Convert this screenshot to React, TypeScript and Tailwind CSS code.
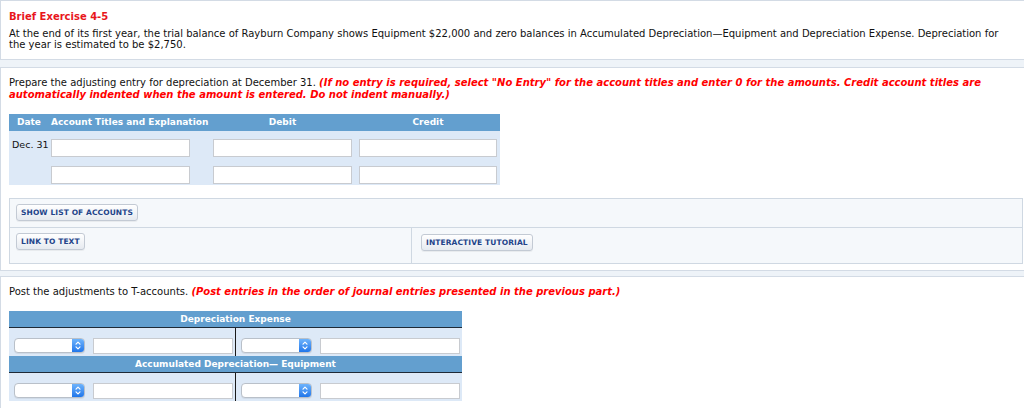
import React from "react";

function Field({ w }: { w: string }) {
  return <div className={`${w} h-[18px] bg-white border border-[#c8cbd0] shrink-0`} />;
}

function Btn({ children }: { children: React.ReactNode }) {
  return (
    <div className="inline-flex items-center h-[17px] px-[4px] rounded-[3px] border border-[#c3cad4] bg-gradient-to-b from-[#ffffff] to-[#e6eaf0] text-[7.5px] font-bold text-[#23448a] leading-none tracking-[0.1px] shadow-[0_1px_0_rgba(0,0,0,0.05)]">
      {children}
    </div>
  );
}

function Sel() {
  return (
    <div className="flex w-[71px] h-[15px] mt-[10px] shrink-0 rounded-[4px] border border-[#b9c0c9] bg-white overflow-hidden shadow-[0_1px_0_rgba(0,0,0,0.06)]">
      <div className="flex-1" />
      <div className="w-[12px] h-full flex items-center justify-center bg-gradient-to-b from-[#6db3fc] to-[#1f76ea]">
        <svg width="6" height="9" viewBox="0 0 6 9" fill="none" stroke="white" strokeWidth="1.2" strokeLinecap="round" strokeLinejoin="round">
          <path d="M1 3.2 L3 1.2 L5 3.2" />
          <path d="M1 5.8 L3 7.8 L5 5.8" />
        </svg>
      </div>
    </div>
  );
}

function TBody() {
  return (
    <div className="flex h-[28px] bg-[#dde9f7]">
      <div className="flex w-[227px] border-r border-[#1a1a1a] pl-[5px] items-start">
        <Sel />
        <div className="w-[140px] h-[16px] mt-[10px] ml-[8px] bg-white border border-[#c8cbd0]" />
      </div>
      <div className="flex w-[226px] pl-[5px] items-start">
        <Sel />
        <div className="w-[140px] h-[16px] mt-[10px] ml-[8px] bg-white border border-[#c8cbd0]" />
      </div>
    </div>
  );
}

function THead({ children }: { children: React.ReactNode }) {
  return (
    <div className="h-[17px] flex items-center justify-center bg-[#639fcf] border-b border-[#1f2a36] text-white font-bold text-[9px] leading-none">
      {children}
    </div>
  );
}

export default function App() {
  return (
    <div className="w-[1024px] h-[408px] overflow-hidden bg-[#eef3f8] text-[#111] font-['DejaVu_Sans',Verdana,sans-serif] text-[10px]">
      {/* Panel 1 */}
      <div className="w-[1040px] h-[60px] bg-white border border-[#d3dbe5] px-[8px] pt-[10px]">
        <div className="font-bold text-[#e8161b] leading-[11px]">Brief Exercise 4-5</div>
        <p className="mt-[6px] leading-[11px] w-[1008px]">
          At the end of its first year, the trial balance of Rayburn Company shows Equipment $22,000 and zero balances in Accumulated Depreciation—Equipment and Depreciation Expense. Depreciation for the year is estimated to be $2,750.
        </p>
      </div>

      {/* Panel 2 */}
      <div className="mt-[7px] w-[1040px] h-[204px] bg-white border border-[#d3dbe5] pl-[8px] pt-[9px]">
        <p className="leading-[12px] w-[1000px]">
          Prepare the adjusting entry for depreciation at December 31.{" "}
          <span className="font-bold italic text-[#ff0000]">
            (If no entry is required, select "No Entry" for the account titles and enter 0 for the amounts. Credit account titles are automatically indented when the amount is entered. Do not indent manually.)
          </span>
        </p>

        <div className="mt-[13px] w-[491px]">
          <div className="h-[17px] flex items-center bg-[#639fcf] text-white font-bold text-[9px] leading-none">
            <div className="w-[42px] pl-[8px]">Date</div>
            <div className="w-[162px]">Account Titles and Explanation</div>
            <div className="w-[139px] text-center">Debit</div>
            <div className="w-[7px]" />
            <div className="w-[138px] text-center">Credit</div>
          </div>
          <div className="h-[54px] bg-[#dde9f7] pt-[8px]">
            <div className="flex items-start">
              <div className="w-[42px] pl-[3px] leading-[12px] shrink-0 text-[9.5px]">Dec. 31</div>
              <Field w="w-[139px]" />
              <div className="w-[23px] shrink-0" />
              <Field w="w-[139px]" />
              <div className="w-[7px] shrink-0" />
              <Field w="w-[138px]" />
            </div>
            <div className="flex items-start mt-[9px]">
              <div className="w-[42px] shrink-0" />
              <Field w="w-[139px]" />
              <div className="w-[23px] shrink-0" />
              <Field w="w-[139px]" />
              <div className="w-[7px] shrink-0" />
              <Field w="w-[138px]" />
            </div>
          </div>
        </div>

        <div className="mt-[13px] w-[1014px] border border-[#cfd8e2] bg-[#f5f8fb]">
          <div className="h-[29px] border-b border-[#cfd8e2] pl-[6px] pt-[5px]">
            <Btn>SHOW LIST OF ACCOUNTS</Btn>
          </div>
          <div className="flex h-[35px]">
            <div className="w-[402px] border-r border-[#cfd8e2] pl-[6px] pt-[5px]">
              <Btn>LINK TO TEXT</Btn>
            </div>
            <div className="pl-[9px] pt-[6px]">
              <Btn>INTERACTIVE TUTORIAL</Btn>
            </div>
          </div>
        </div>
      </div>

      {/* Panel 3 */}
      <div className="mt-[5px] w-[1040px] h-[160px] bg-white border border-[#d3dbe5] pl-[8px] pt-[9px]">
        <p className="leading-[12px]">
          Post the adjustments to T-accounts.{" "}
          <span className="font-bold italic text-[#ff0000]">
            (Post entries in the order of journal entries presented in the previous part.)
          </span>
        </p>
        <div className="mt-[13px] w-[453px]">
          <THead>Depreciation Expense</THead>
          <TBody />
          <THead>Accumulated Depreciation— Equipment</THead>
          <TBody />
        </div>
      </div>
    </div>
  );
}
